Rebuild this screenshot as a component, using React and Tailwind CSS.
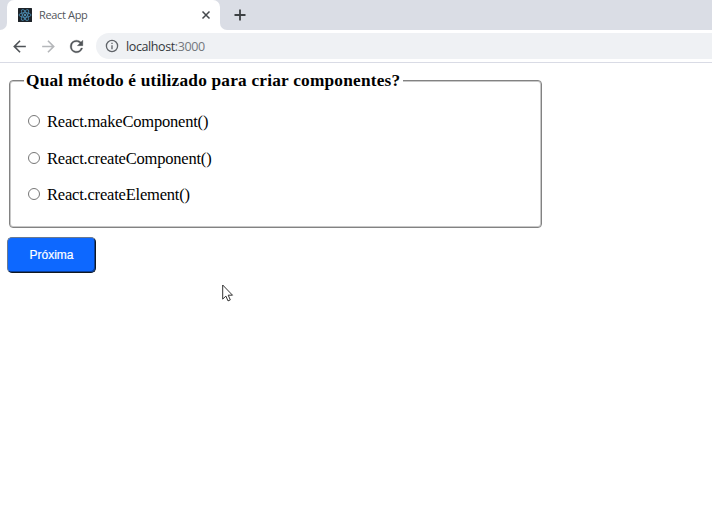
import React from "react";

const options = [
  { label: "React.makeComponent()" },
  { label: "React.createComponent()" },
  { label: "React.createElement()" },
];

function ReactLogo() {
  return (
    <svg width="14" height="14" viewBox="0 0 14 14" className="shrink-0">
      <rect width="14" height="14" rx="0.5" fill="#1d2329" />
      <g fill="none" stroke="#4a8bb0" strokeWidth="0.9">
        <ellipse cx="7" cy="7" rx="6" ry="2.3" />
        <ellipse cx="7" cy="7" rx="6" ry="2.3" transform="rotate(60 7 7)" />
        <ellipse cx="7" cy="7" rx="6" ry="2.3" transform="rotate(120 7 7)" />
      </g>
      <circle cx="7" cy="7" r="1.1" fill="#5aa0c5" />
    </svg>
  );
}

function Arrow({ flip, color }) {
  return (
    <svg width="19" height="19" viewBox="0 0 24 24" fill={color} className={flip ? "rotate-180" : ""}>
      <path d="M20 11H7.83l5.59-5.59L12 4l-8 8 8 8 1.41-1.41L7.83 13H20v-2z" />
    </svg>
  );
}

function TabStrip() {
  return (
    <div className="flex h-[30px] bg-[#dadde5]">
      <div className="w-[7px] bg-white">
        <div className="h-full rounded-br-[7px] bg-[#dadde5]" />
      </div>
      <div className="flex w-[213px] items-center rounded-tr-[7px] rounded-tl-[7px] bg-white pl-[11px] pr-[9px]">
        <ReactLogo />
        <span className="ml-[7px] text-[11px] leading-[18px] tracking-[-0.35px] whitespace-nowrap text-[#52565b] [font-family:'Open_Sans','Noto_Sans',sans-serif]">
          React App
        </span>
        <svg className="ml-auto" width="10" height="10" viewBox="0 0 10 10" stroke="#45494d" strokeWidth="1.5">
          <path d="M1.5 1.5l7 7M8.5 1.5l-7 7" />
        </svg>
      </div>
      <div className="flex flex-1 bg-white">
        <div className="flex h-full w-full items-center rounded-bl-[7px] bg-[#dadde5] pl-[14px]">
          <svg width="12" height="12" viewBox="0 0 12 12" stroke="#3c4043" strokeWidth="1.8">
            <path d="M6 .5v11M.5 6h11" />
          </svg>
        </div>
      </div>
    </div>
  );
}

function Toolbar() {
  return (
    <div className="flex h-[33px] items-center border-b border-[#d9dbe5] bg-white pl-[10px]">
      <Arrow color="#4f5357" />
      <div className="ml-[10px]"><Arrow flip color="#b5b7ba" /></div>
      <svg className="ml-[9px]" width="19" height="19" viewBox="0 0 24 24" fill="#4f5357" stroke="#4f5357" strokeWidth="0.4">
        <path d="M17.65 6.35A7.96 7.96 0 0 0 12 4a8 8 0 1 0 7.73 10h-2.08A6 6 0 1 1 12 6c1.66 0 3.14.69 4.22 1.78L13 11h7V4l-2.35 2.35z" />
      </svg>
      <div className="ml-[10px] flex h-[26px] flex-1 items-center rounded-l-full bg-[#eff1f4] pl-[9px]">
        <svg width="14" height="14" viewBox="0 0 14 14" fill="none" stroke="#5f6368" strokeWidth="1.3">
          <circle cx="7" cy="7" r="5.6" />
          <path d="M7 6.2v4M7 3.7v1.3" />
        </svg>
        <span className="ml-[7px] pt-px text-[12.5px] leading-[20px] tracking-[-0.39px] whitespace-nowrap text-[#33373b] [font-family:'Open_Sans','Noto_Sans',sans-serif]">
          localhost<span className="text-[#74787d]">:3000</span>
        </span>
      </div>
    </div>
  );
}

export default function App() {
  return (
    <div className="relative h-[530px] w-[712px] overflow-hidden bg-white text-black">
      <TabStrip />
      <Toolbar />
      <main className="pt-[8px]">
        <fieldset className="ml-[9px] h-[157px] w-[533px] rounded-[4px] border border-[#828282] pl-[14px] shadow-[inset_0_0_0_1px_#c8c8c8]">
          <legend className="h-[18px] w-[379px] bg-white pl-[2px] text-[17.3px] leading-[20px] font-bold whitespace-nowrap tracking-[0.21px] [font-family:'Liberation_Serif',serif]">
            Qual método é utilizado para criar componentes?
          </legend>
          <div className="flex flex-col gap-[16.5px] pt-[23px] pl-[4px]">
            {options.map((option) => (
              <label key={option.label} className="flex h-[20px] items-center">
                <input type="radio" name="answer" className="m-0 mb-[1.5px] h-[12px] w-[12px] appearance-none rounded-full border border-[#777777] bg-white" />
                <span className="ml-[7px] text-[16.5px] leading-[20px] tracking-[-0.2px] whitespace-nowrap [font-family:'Liberation_Serif',serif]">
                  {option.label}
                </span>
              </label>
            ))}
          </div>
        </fieldset>
        <button className="mt-[9px] ml-[7px] flex h-[36px] w-[89px] items-center justify-center rounded-[5px] border border-t-[#6b7a90] border-r-[#101820] border-b-[#101820] border-l-[#6b7a90] bg-[#0d68ff] text-[12px] font-normal text-white shadow-[inset_-1px_-1px_0_#0b3f99] [font-family:'Liberation_Sans',sans-serif] [-webkit-text-stroke:0.2px_white]">
          Próxima
        </button>
      </main>
      <svg className="absolute top-[284px] left-[222px]" width="12" height="19" viewBox="0 0 12 19">
        <path d="M.7 1v14.1l3.2-3 2.1 4.8 2.3-1-2.1-4.7h4.3z" fill="white" stroke="#333" strokeWidth="1" />
      </svg>
    </div>
  );
}
